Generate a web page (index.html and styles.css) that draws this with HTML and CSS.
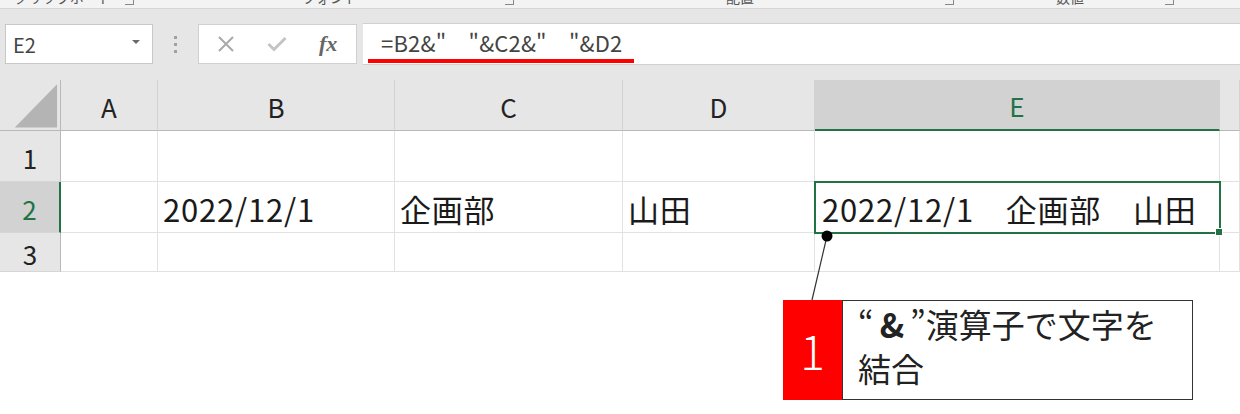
FILE: index.html
```html
<!DOCTYPE html>
<html lang="ja">
<head>
  <meta charset="UTF-8">
  <title>文字列の結合</title>
  <link rel="stylesheet" href="styles.css">
</head>
<body>
<div class="page">

  <div class="ribbon-strip">
    <div class="group g-clip"><span class="label">クリップボード</span><span class="launcher"></span></div>
    <div class="group g-font"><span class="label">フォント</span><span class="launcher"></span></div>
    <div class="group g-align"><span class="label">配置</span><span class="launcher"></span></div>
    <div class="group g-num"><span class="label">数値</span><span class="launcher"></span></div>
  </div>

  <div class="formula-bar">
    <div class="name-box">
      <span>E2</span>
      <span class="drop"></span>
    </div>
    <div class="grip"><i></i><i></i><i></i></div>
    <div class="fx-buttons">
      <svg class="ico" width="18" height="18" viewBox="0 0 18 18"><path d="M2 2 L16 16 M16 2 L2 16" stroke="#a9a9a9" stroke-width="2" fill="none"/></svg>
      <svg class="ico" width="20" height="16" viewBox="0 0 20 16"><path d="M1.5 8 L7 13.5 L18.5 2" stroke="#c4c4c4" stroke-width="3" fill="none"/></svg>
      <span class="fx">fx</span>
    </div>
    <div class="formula-input">
      <span class="formula">=B2&amp;"　"&amp;C2&amp;"　"&amp;D2</span>
      <span class="mark"></span>
    </div>
  </div>

  <div class="sheet">
    <div class="hd corner">
      <svg width="61" height="50" viewBox="0 0 61 50"><polygon points="15,48 58,4 58,48" fill="#b4b4b4"/></svg>
    </div>
    <div class="hd col">A</div>
    <div class="hd col">B</div>
    <div class="hd col">C</div>
    <div class="hd col">D</div>
    <div class="hd col active">E</div>
    <div class="hd col"></div>

    <div class="hd row">1</div>
    <div class="cell"></div>
    <div class="cell"></div>
    <div class="cell"></div>
    <div class="cell"></div>
    <div class="cell"></div>
    <div class="cell"></div>

    <div class="hd row active">2</div>
    <div class="cell"></div>
    <div class="cell">2022/12/1</div>
    <div class="cell">企画部</div>
    <div class="cell">山田</div>
    <div class="cell selected">2022/12/1　企画部　山田</div>
    <div class="cell"></div>

    <div class="hd row">3</div>
    <div class="cell"></div>
    <div class="cell"></div>
    <div class="cell"></div>
    <div class="cell"></div>
    <div class="cell"></div>
    <div class="cell"></div>
  </div>

  <svg class="leader" width="40" height="80" viewBox="0 0 40 80">
    <line x1="22" y1="6" x2="7" y2="70" stroke="#333" stroke-width="1.2"/>
    <circle cx="22" cy="6" r="5.5" fill="#000"/>
  </svg>

  <div class="callout">
    <div class="num">1</div>
    <div class="note">“<b>&amp;</b>”演算子で文字を<br>結合</div>
  </div>

</div>
</body>
</html>
```

FILE: styles.css
```css
body {
  margin: 0;
  background-color: #fff;
  font-family: 'Noto Sans CJK JP', 'Noto Sans', sans-serif;
  color: #222;
}

.page {
  position: relative;
  width: 1240px;
  height: 414px;
  overflow: hidden;
}

/* ribbon group labels, cut off at the top */
.ribbon-strip {
  display: flex;
  height: 8px;
  overflow: hidden;
  background-color: #f3f3f3;
  border-bottom: 1px solid #d6d6d6;
}

.group {
  display: flex;
  align-items: flex-start;
  justify-content: center;
  position: relative;
}

.g-clip { width: 140px; justify-content: flex-start; padding-left: 14px; box-sizing: border-box; }
.g-font { width: 380px; }
.g-align { width: 440px; }
.g-num { width: 220px; }

.label {
  font-size: 14px;
  line-height: 14px;
  margin-top: -10px;
  color: #555;
}

.launcher {
  position: absolute;
  right: 6px;
  top: -6px;
  width: 8px;
  height: 10px;
  border-right: 1px solid #888;
  border-bottom: 1px solid #888;
}

/* formula bar */
.formula-bar {
  display: flex;
  align-items: center;
  height: 71px;
  padding: 0 0 1px 5px;
  box-sizing: border-box;
  background-color: #e6e6e6;
}

.name-box {
  display: flex;
  align-items: center;
  justify-content: space-between;
  width: 148px;
  height: 40px;
  padding: 0 12px 0 7px;
  box-sizing: border-box;
  background-color: #fff;
  border: 1px solid #c8c8c8;
  font-size: 20px;
  color: #444;
}

.drop {
  width: 0;
  height: 0;
  border-left: 4px solid transparent;
  border-right: 4px solid transparent;
  border-top: 4px solid #6a6a6a;
  margin-top: -4px;
}

.grip {
  display: flex;
  flex-direction: column;
  gap: 4px;
  width: 45px;
  align-items: center;
}

.grip i {
  display: block;
  width: 3px;
  height: 3px;
  background-color: #a0a0a0;
}

.fx-buttons {
  display: flex;
  align-items: center;
  gap: 32px;
  width: 159px;
  height: 40px;
  padding-left: 18px;
  box-sizing: border-box;
  background-color: #fff;
  border: 1px solid #d0d0d0;
}

.fx {
  font-family: 'Liberation Serif', serif;
  font-style: italic;
  font-weight: bold;
  font-size: 22px;
  color: #666;
  margin-left: 0;
}

.formula-input {
  position: relative;
  flex: 1;
  height: 40px;
  margin-left: 6px;
  padding-left: 18px;
  background-color: #fff;
  border-top: 1px solid #d0d0d0;
  border-bottom: 1px solid #d0d0d0;
  display: flex;
  align-items: center;
}

.formula {
  font-size: 22px;
  color: #444;
  letter-spacing: 0.2px;
  margin-top: -4px;
}

.mark {
  position: absolute;
  left: 5px;
  bottom: 1px;
  width: 266px;
  height: 4px;
  background-color: #ff0000;
}

/* sheet grid */
.sheet {
  display: grid;
  grid-template-columns: 61px 97px 237px 228px 192px 405px 20px;
  grid-template-rows: 51px 51px 51px 39px;
}

.hd {
  display: flex;
  align-items: center;
  justify-content: center;
  background-color: #e6e6e6;
  font-size: 26px;
  color: #222;
  box-sizing: border-box;
}

.col {
  border-right: 1px solid #d2d2d2;
  border-bottom: 1px solid #b8b8b8;
  padding-top: 2px;
}

.corner {
  border-right: 1px solid #b8b8b8;
  border-bottom: 1px solid #b8b8b8;
  align-items: flex-end;
}

.row {
  border-right: 1px solid #b8b8b8;
  border-bottom: 1px solid #d6d6d6;
  padding-top: 2px;
}

.hd.active {
  background-color: #d2d2d2;
  color: #217346;
}

.col.active {
  border-bottom: 2px solid #217346;
}

.row.active {
  border-right: 2px solid #217346;
}

.cell {
  display: flex;
  align-items: center;
  padding: 3px 0 0 5px;
  box-sizing: border-box;
  border-right: 1px solid #e1e1e1;
  border-bottom: 1px solid #e1e1e1;
  font-size: 31px;
  letter-spacing: 0.8px;
  white-space: nowrap;
  color: #1a1a1a;
}

.cell.selected {
  position: relative;
  outline: 2px solid #217346;
  outline-offset: -1px;
  padding-left: 7px;
}

.cell.selected::after {
  content: "";
  position: absolute;
  right: -4px;
  bottom: -4px;
  width: 6px;
  height: 6px;
  background-color: #217346;
  border: 1px solid #fff;
}

/* annotation */
.leader {
  position: absolute;
  left: 805px;
  top: 230px;
}

.callout {
  position: absolute;
  left: 783px;
  top: 300px;
  display: flex;
}

.num {
  width: 59px;
  height: 100px;
  display: flex;
  align-items: center;
  justify-content: center;
  background-color: #ff0000;
  color: #fff;
  font-size: 46px;
  font-weight: 300;
}

.note {
  width: 351px;
  height: 100px;
  box-sizing: border-box;
  padding: 1px 0 0 15px;
  background-color: #fff;
  border: 1.5px solid #333;
  font-size: 33px;
  line-height: 44px;
  color: #222;
}

.note b {
  margin: 0 6px;
}
```
